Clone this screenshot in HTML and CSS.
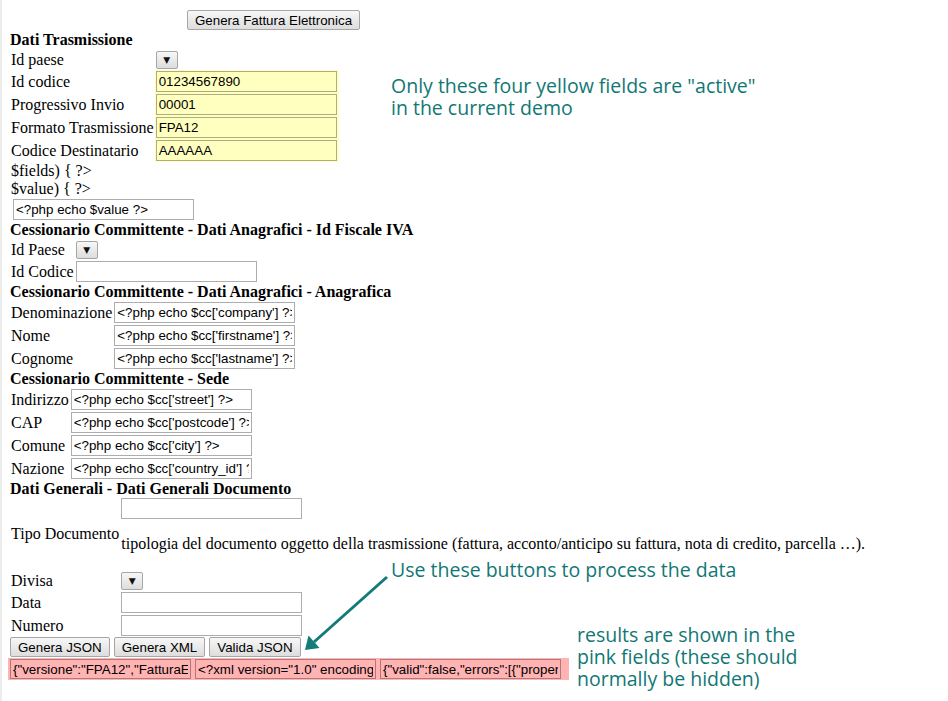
FILE: index.html
```html
<!DOCTYPE html>
<html lang="it">
<head>
<meta charset="utf-8">
<title>Fattura Elettronica</title>
<link rel="stylesheet" href="styles.css">
</head>
<body>
<form class="invoice-form">
  <div class="toolbar">
    <button type="button" class="btn">Genera Fattura Elettronica</button>
  </div>

  <h2 class="sec-title sec-title--first">Dati Trasmissione</h2>
  <div class="form-grid">
    <label class="lbl">Id paese</label>
    <span class="cell"><span class="dropdown">▼</span></span>
    <label class="lbl">Id codice</label>
    <span class="cell cell--active"><input class="field field--active" value="01234567890"></span>
    <label class="lbl">Progressivo Invio</label>
    <span class="cell cell--active"><input class="field field--active" value="00001"></span>
    <label class="lbl">Formato Trasmissione</label>
    <span class="cell cell--active"><input class="field field--active" value="FPA12"></span>
    <label class="lbl">Codice Destinatario</label>
    <span class="cell cell--active"><input class="field field--active" value="AAAAAA"></span>
  </div>

  <div class="stray">$fields) { ?&gt;</div>
  <div class="stray">$value) { ?&gt;</div>
  <div class="stray-field"><input class="field" value="&lt;?php echo $value ?&gt;"></div>

  <h2 class="sec-title">Cessionario Committente - Dati Anagrafici - Id Fiscale IVA</h2>
  <div class="form-grid">
    <label class="lbl">Id Paese</label>
    <span class="cell"><span class="dropdown">▼</span></span>
    <label class="lbl">Id Codice</label>
    <span class="cell"><input class="field" value=""></span>
  </div>

  <h2 class="sec-title">Cessionario Committente - Dati Anagrafici - Anagrafica</h2>
  <div class="form-grid">
    <label class="lbl">Denominazione</label>
    <span class="cell"><input class="field" value="&lt;?php echo $cc['company'] ?&gt;"></span>
    <label class="lbl">Nome</label>
    <span class="cell"><input class="field" value="&lt;?php echo $cc['firstname'] ?&gt;"></span>
    <label class="lbl">Cognome</label>
    <span class="cell"><input class="field" value="&lt;?php echo $cc['lastname'] ?&gt;"></span>
  </div>

  <h2 class="sec-title">Cessionario Committente - Sede</h2>
  <div class="form-grid">
    <label class="lbl">Indirizzo</label>
    <span class="cell"><input class="field" value="&lt;?php echo $cc['street'] ?&gt;"></span>
    <label class="lbl">CAP</label>
    <span class="cell"><input class="field" value="&lt;?php echo $cc['postcode'] ?&gt;"></span>
    <label class="lbl">Comune</label>
    <span class="cell"><input class="field" value="&lt;?php echo $cc['city'] ?&gt;"></span>
    <label class="lbl">Nazione</label>
    <span class="cell"><input class="field" value="&lt;?php echo $cc['country_id'] ?&gt;"></span>
  </div>

  <h2 class="sec-title">Dati Generali - Dati Generali Documento</h2>
  <div class="form-grid">
    <label class="lbl">Tipo Documento</label>
    <span class="cell cell--stack">
      <input class="field" value="">
      <span class="hint">tipologia del documento oggetto della trasmissione (fattura, acconto/anticipo su fattura, nota di credito, parcella …).</span>
    </span>
    <label class="lbl">Divisa</label>
    <span class="cell"><span class="dropdown">▼</span></span>
    <label class="lbl">Data</label>
    <span class="cell"><input class="field" value=""></span>
    <label class="lbl">Numero</label>
    <span class="cell"><input class="field" value=""></span>
  </div>

  <div class="actions">
    <button type="button" class="btn">Genera JSON</button>
    <button type="button" class="btn">Genera XML</button>
    <button type="button" class="btn">Valida JSON</button>
  </div>

  <div class="results">
    <input class="field field--result" value='{"versione":"FPA12","FatturaElettronicaHeader":{}}'>
    <input class="field field--result" value='&lt;?xml version="1.0" encoding="UTF-8"?&gt;'>
    <input class="field field--result" value='{"valid":false,"errors":[{"property":""}]}'>
  </div>
</form>

<div class="note note--active">
  <span class="note-line">Only these four yellow fields are "active"</span>
  <span class="note-line">in the current demo</span>
</div>
<div class="note note--buttons">
  <span class="note-line">Use these buttons to process the data</span>
</div>
<div class="note note--results">
  <span class="note-line">results are shown in the</span>
  <span class="note-line">pink fields (these should</span>
  <span class="note-line">normally be hidden)</span>
</div>

<svg class="arrow" width="90" height="85" viewBox="0 0 90 85" aria-hidden="true">
  <line x1="87" y1="7" x2="14" y2="72" stroke="#137b79" stroke-width="3"/>
  <polygon points="5,80 8.5,65.5 19.5,78" fill="#137b79"/>
</svg>
</body>
</html>
```
FILE: styles.css
```css
html {
  background: linear-gradient(to right, #ececec 0, #ececec 2px, #ffffff 2px);
}

body {
  margin: 8px;
  font-family: "Liberation Serif", "Times New Roman", serif;
  font-size: 16px;
  color: #000;
}

.invoice-form {
  margin: 0;
}

.toolbar {
  display: flex;
  padding: 2px 0 0 179px;
  margin-bottom: 1px;
}

.btn {
  font: 13.333px "Liberation Sans", Arial, sans-serif;
  color: #000;
  height: 20px;
  box-sizing: border-box;
  padding: 0 7px;
  margin: 0;
  border: 1px solid #a6a6a6;
  border-radius: 2px;
  background: linear-gradient(#f7f7f7, #dddddd);
}

.sec-title {
  margin: 0;
  font-size: 16px;
  font-weight: bold;
  line-height: 18px;
  padding-left: 2px;
}

.form-grid {
  display: grid;
  grid-template-columns: max-content max-content;
  align-items: center;
}

.lbl {
  padding: 0 1px 0 3px;
  line-height: 18px;
}

.cell {
  display: flex;
  align-items: center;
  min-height: 21px;
  box-sizing: border-box;
  padding: 1px 0 1px 1px;
}

.cell--active {
  background: #ffffbf;
  padding-right: 2px;
}

.cell--stack {
  display: block;
  padding-top: 0;
}

.hint {
  display: block;
  margin: 16px 0;
  line-height: 18px;
  white-space: nowrap;
}

.field {
  display: block;
  width: 181px;
  height: 21px;
  box-sizing: border-box;
  margin: 0;
  padding: 1px 2px;
  border: 1px solid rgba(0, 0, 0, 0.32);
  border-radius: 0;
  background: #fff;
  font: 13.333px "Liberation Sans", Arial, sans-serif;
  color: #000;
}

.field--active {
  background: #ffffbf;
}

.dropdown {
  display: flex;
  align-items: center;
  justify-content: center;
  width: 22px;
  height: 18px;
  box-sizing: border-box;
  border: 1px solid #a6a6a6;
  border-radius: 2px;
  background: linear-gradient(#f7f7f7, #dddddd);
  font: 9px "DejaVu Sans", sans-serif;
  color: #111;
}

.stray {
  padding-left: 3px;
  line-height: 18px;
}

.stray-field {
  display: flex;
  padding: 1px 0 0 5px;
  margin-bottom: 1px;
}

.actions {
  display: flex;
  gap: 4px;
  padding-left: 2px;
}

.results {
  display: flex;
  gap: 4px;
  width: max-content;
  margin: 1px 0 0 -3px;
  padding: 1px 8px 1px 5px;
  background: #ffb3b3;
}

.field--result {
  height: 20px;
  background: #ffb3b3;
}

.note {
  position: absolute;
  font: 19.5px/22px "Open Sans", sans-serif;
  color: #117775;
  white-space: nowrap;
}

.note-line {
  display: block;
  height: 22px;
}

.note--active {
  left: 391px;
  top: 75px;
}

.note--buttons {
  left: 391px;
  top: 559px;
}

.note--results {
  left: 577px;
  top: 624px;
}

.arrow {
  position: absolute;
  left: 300px;
  top: 570px;
  pointer-events: none;
}
```
